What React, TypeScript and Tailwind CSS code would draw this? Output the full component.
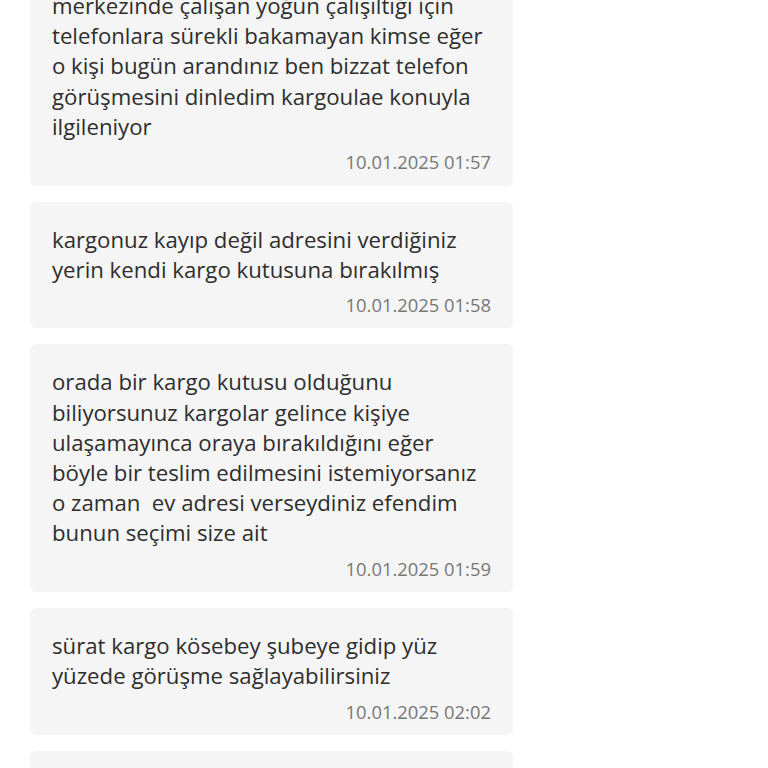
const messages = [
  {
    text: "merkezinde çalışan yoğun çalışıltığı için telefonlara sürekli bakamayan kimse eğer o kişi bugün arandınız ben bizzat telefon görüşmesini dinledim kargoulae konuyla ilgileniyor",
    time: "10.01.2025 01:57",
  },
  {
    text: "kargonuz kayıp değil adresini verdiğiniz yerin kendi kargo kutusuna bırakılmış",
    time: "10.01.2025 01:58",
  },
  {
    text: "orada bir kargo kutusu olduğunu biliyorsunuz kargolar gelince kişiye ulaşamayınca oraya bırakıldığını eğer böyle bir teslim edilmesini istemiyorsanız o zaman  ev adresi verseydiniz efendim bunun seçimi size ait",
    time: "10.01.2025 01:59",
  },
  {
    text: "sürat kargo kösebey şubeye gidip yüz yüzede görüşme sağlayabilirsiniz",
    time: "10.01.2025 02:02",
  },
  {
    text: "başka bir konuda yardımcı olabileceğim bir şey var mı",
    time: "10.01.2025 02:03",
  },
];

function Bubble({ text, time }: { text: string; time: string }) {
  return (
    <div className="w-[483px] rounded-md bg-[#f5f5f5] px-[22px] pt-[23px] pb-[11.5px]">
      <p className="whitespace-pre-wrap text-[22.2px] leading-[30.2px] text-[#2e2e2e]">{text}</p>
      <div className="mt-2 text-right text-[18.4px] leading-[24px] text-[#777777]">{time}</div>
    </div>
  );
}

export default function App() {
  return (
    <div
      className="h-[768px] w-[768px] overflow-hidden bg-white"
      style={{ fontFamily: '"Open Sans", "Noto Sans", sans-serif' }}
    >
      <div className="-mt-[32px] flex flex-col gap-4 pl-[30px]">
        {messages.map((m) => (
          <Bubble key={m.time} text={m.text} time={m.time} />
        ))}
      </div>
    </div>
  );
}
